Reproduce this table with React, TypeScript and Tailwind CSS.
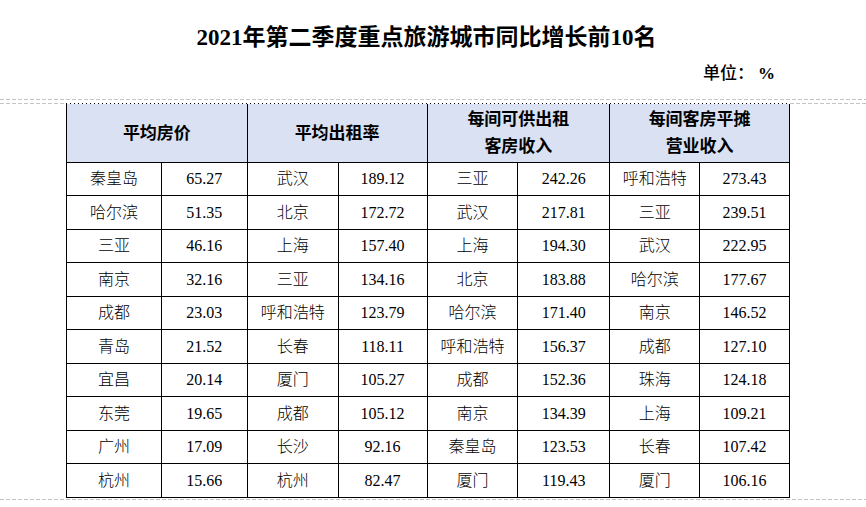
import React from "react";

const serif = "font-['Liberation_Serif','Noto_Sans_CJK_SC',serif]";

const rows: [string, string, string, string, string, string, string, string][] = [
  ["秦皇岛", "65.27", "武汉", "189.12", "三亚", "242.26", "呼和浩特", "273.43"],
  ["哈尔滨", "51.35", "北京", "172.72", "武汉", "217.81", "三亚", "239.51"],
  ["三亚", "46.16", "上海", "157.40", "上海", "194.30", "武汉", "222.95"],
  ["南京", "32.16", "三亚", "134.16", "北京", "183.88", "哈尔滨", "177.67"],
  ["成都", "23.03", "呼和浩特", "123.79", "哈尔滨", "171.40", "南京", "146.52"],
  ["青岛", "21.52", "长春", "118.11", "呼和浩特", "156.37", "成都", "127.10"],
  ["宜昌", "20.14", "厦门", "105.27", "成都", "152.36", "珠海", "124.18"],
  ["东莞", "19.65", "成都", "105.12", "南京", "134.39", "上海", "109.21"],
  ["广州", "17.09", "长沙", "92.16", "秦皇岛", "123.53", "长春", "107.42"],
  ["杭州", "15.66", "杭州", "82.47", "厦门", "119.43", "厦门", "106.16"],
];

const colWidths = ["w-[95px]", "w-[86px]", "w-[91px]", "w-[89px]", "w-[91px]", "w-[92px]", "w-[90px]", "w-[90px]"];

function Dashed() {
  return (
    <div className="h-px w-full bg-[repeating-linear-gradient(to_right,#c4c4c4_0_4px,transparent_4px_6px)]" />
  );
}

function Header({ lines, width }: { lines: string[]; width: string }) {
  return (
    <div
      className={`${width} h-[59px] flex flex-col items-center justify-center border-r border-b border-black bg-[#d9e1f2] text-[17px] leading-[27px] font-bold text-black`}
    >
      {lines.map((l) => (
        <div key={l}>{l}</div>
      ))}
    </div>
  );
}

export default function App() {
  return (
    <div className={`w-[866px] h-[507px] bg-white overflow-hidden ${serif}`}>
      {/* Title */}
      <div className="pt-[23px] pr-[13px] h-[53px] text-center text-[23px] leading-[30px] font-bold text-black">
        2021年第二季度重点旅游城市同比增长前10名
      </div>
      <div className="h-[46px] flex justify-end pr-[91px] pt-[9px] text-[17px] leading-[24px] text-black">
        <span className="font-medium">单位：</span>
        <span className="font-bold ml-1">%</span>
      </div>

      <Dashed />
      <div className="h-[3px]" />

      <div className="flex">
        <div className="w-[66px] shrink-0">
          <Dashed />
        </div>
        <div className="w-[724px] shrink-0">
          <div className="h-px w-full bg-[repeating-linear-gradient(to_right,#000_0_1px,transparent_1px_4px)]" />
          <div className="border-l border-black">
            <div className="flex">
              <Header lines={["平均房价"]} width="w-[181px]" />
              <Header lines={["平均出租率"]} width="w-[180px]" />
              <Header lines={["每间可供出租", "客房收入"]} width="w-[183px]" />
              <Header lines={["每间客房平摊", "营业收入"]} width="w-[180px]" />
            </div>
            {rows.map((r, i) => (
              <div key={i} className={`flex ${i % 2 === 0 ? "h-[33px]" : "h-[34px]"}`}>
                {r.map((c, j) => (
                  <div
                    key={j}
                    className={`${colWidths[j]} h-full flex items-center justify-center border-r border-b border-black text-[16px] font-light text-black`}
                  >
                    {c}
                  </div>
                ))}
              </div>
            ))}
          </div>
        </div>
        <div className="flex-1">
          <Dashed />
        </div>
      </div>
      <div className="h-px" />
      <Dashed />
    </div>
  );
}
